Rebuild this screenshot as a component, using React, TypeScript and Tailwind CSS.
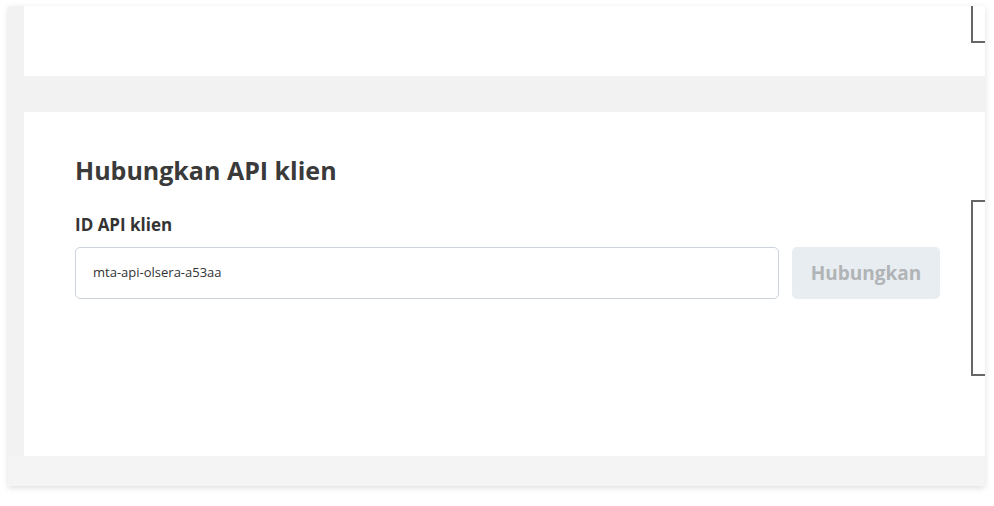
import React from "react";

export default function App() {
  return (
    <div
      className="w-[994px] h-[506px] bg-white pt-[6px] pl-[8px]"
      style={{ fontFamily: "'Open Sans', 'Noto Sans', sans-serif" }}
    >
      <div className="w-[977px] bg-[#f2f2f2] shadow-[0_2px_6px_rgba(0,0,0,0.13)] flex flex-col">
        <div className="pl-[16px] flex flex-col">
          {/* top panel */}
          <div className="h-[70px] bg-white overflow-hidden flex">
            <div className="w-[947px] shrink-0" />
            <div className="w-[60px] h-[60px] mt-[-23px] shrink-0 border-2 border-[#666666]" />
          </div>
          <div className="h-[36px]" />
          {/* main panel */}
          <div className="h-[344px] bg-white overflow-hidden flex items-center pl-[51px]">
            <div className="w-[865px] shrink-0 self-start pt-[44px] flex flex-col">
              <h2 className="text-[25px] leading-[28px] font-bold text-[#3a3a3a]">
                Hubungkan API klien
              </h2>
              <label className="mt-[31px] text-[17px] leading-[20px] font-bold text-[#333333]">
                ID API klien
              </label>
              <div className="mt-[12px] flex gap-[13px]">
                <div className="w-[704px] h-[52px] rounded-[5px] border border-[#ccd3db] flex items-center pl-[17px] text-[13px] text-[#333333]">
                  mta-api-olsera-a53aa
                </div>
                <button className="w-[148px] h-[52px] rounded-[5px] bg-[#e8edf1] text-[19px] font-bold text-[#b1b4b6]">
                  Hubungkan
                </button>
              </div>
            </div>
            <div className="ml-[31px] w-[60px] h-[176px] mt-[8px] shrink-0 border-2 border-[#666666]" />
          </div>
        </div>
        <div className="h-[30px] bg-[#f4f4f4]" />
      </div>
    </div>
  );
}
